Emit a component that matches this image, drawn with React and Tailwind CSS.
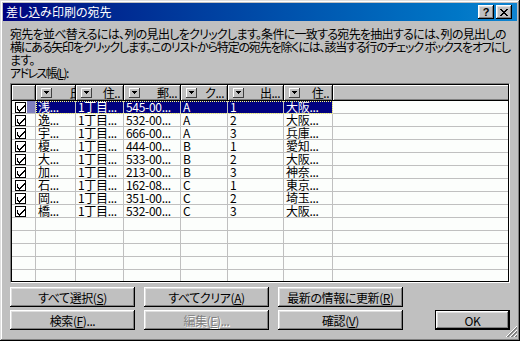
import React from "react";

const data = [
  ["浅...", "1丁目...", "545-00...", "A", "1", "大阪..."],
  ["逸...", "1丁目...", "532-00...", "A", "2", "大阪..."],
  ["宇...", "1丁目...", "666-00...", "A", "3", "兵庫..."],
  ["榎...", "1丁目...", "444-00...", "B", "1", "愛知..."],
  ["大...", "1丁目...", "533-00...", "B", "2", "大阪..."],
  ["加...", "1丁目...", "213-00...", "B", "3", "神奈..."],
  ["石...", "1丁目...", "162-08...", "C", "1", "東京..."],
  ["岡...", "1丁目...", "351-00...", "C", "2", "埼玉..."],
  ["橋...", "1丁目...", "532-00...", "C", "3", "大阪..."],
];

const colW = ["w-[40px]", "w-[48px]", "w-[57px]", "w-[47px]", "w-[56px]", "w-[49px]"];
const heads = ["氏", "住..", "郵...", "ク...", "出...", "住.."];

const raised =
  "shadow-[inset_-1px_-1px_#000,inset_1px_1px_#fff,inset_-2px_-2px_#808080,inset_2px_2px_#dfdfdf]";

function Check() {
  return (
    <div className="w-[11px] h-[11px] bg-white border border-black flex items-center justify-center">
      <svg width="9" height="9" viewBox="0 0 9 9" shapeRendering="crispEdges">
        <path d="M1 3h1v3h1v1h1v-1h1v-1h1v-1h1v-1h1v-1h1v2h-1v1h-1v1h-1v1h-1v1h-1v1h-1v-1h-1v-1h-1z" fill="#000" />
      </svg>
    </div>
  );
}

function HeadBtn() {
  return (
    <div className="w-[11px] h-[10px] bg-[#c0c0c0] shadow-[inset_-1px_-1px_#404040,inset_1px_1px_#fff] flex items-center justify-center">
      <svg width="5" height="3" viewBox="0 0 5 3" shapeRendering="crispEdges">
        <path d="M0 0h5v1h-1v1h-1v1h-1v-1h-1v-1h-1z" fill="#000" />
      </svg>
    </div>
  );
}

function Btn({ children, className = "", disabled = false }) {
  return (
    <div
      className={
        "h-[20px] flex items-center justify-center bg-[#c0c0c0] text-[12px] leading-[13px] tracking-[-0.4px] whitespace-nowrap " +
        raised +
        " " +
        (disabled ? "text-[#808080] [text-shadow:1px_1px_#fff] " : "text-black ") +
        className
      }
    >
      {children}
    </div>
  );
}

export default function App() {
  return (
    <div className="w-[520px] h-[341px] bg-[#c0c0c0] relative font-['Noto_Sans_CJK_JP',sans-serif] [font-feature-settings:'palt'] text-black shadow-[inset_-1px_-1px_#000,inset_1px_1px_#dfdfdf,inset_-2px_-2px_#808080,inset_2px_2px_#fff] p-[3px] flex flex-col overflow-hidden">
      {/* title bar */}
      <div className="h-[18px] bg-gradient-to-r from-[#000080] to-[#1084d0] flex items-center pl-[3px] pr-[5px]">
        <span className="text-white text-[12px] leading-[14px] whitespace-nowrap">差し込み印刷の宛先</span>
        <div className="ml-auto flex gap-[2px]">
          <div className={"w-[16px] h-[14px] bg-[#c0c0c0] flex items-center justify-center " + raised}>
            <span className="font-['Liberation_Sans',sans-serif] font-bold text-[11px] leading-[11px]">?</span>
          </div>
          <div className={"w-[16px] h-[14px] bg-[#c0c0c0] flex items-center justify-center " + raised}>
            <svg width="8" height="7" viewBox="0 0 8 7" shapeRendering="crispEdges">
              <path d="M0 0h2v1h1v1h2v-1h1v-1h2v1h-1v1h-1v1h-1v1h1v1h1v1h1v1h-2v-1h-1v-1h-2v1h-1v1h-2v-1h1v-1h1v-1h1v-1h-1v-1h-1v-1h-1z" fill="#000" />
            </svg>
          </div>
        </div>
      </div>

      {/* body */}
      <div className="flex-1 flex flex-col px-[7px] pt-[6px]">
        <div className="text-[12px] leading-[13px] whitespace-nowrap">
          <div className="tracking-[-0.7px]">宛先を並べ替えるには、列の見出しをクリックします。条件に一致する宛先を抽出するには、列の見出しの</div>
          <div className="tracking-[-1.17px]">横にある矢印をクリックします。このリストから特定の宛先を除くには、該当する行のチェック ボックスをオフにし</div>
          <div className="tracking-[-0.7px]">ます。</div>
          <div className="tracking-[-1.6px]">
            アドレス帳(<span className="underline">L</span>):
          </div>
        </div>

        {/* list */}
        <div className="mt-[4px] h-[200px] border border-t-[#808080] border-l-[#808080] border-b-white border-r-white">
          <div className="h-full border border-black bg-[#fcfefc] overflow-hidden flex flex-col">
            {/* header */}
            <div className="h-[16px] shrink-0 flex bg-[#c0c0c0] text-[12px] leading-[13px]">
              <div className="w-[24px] h-full border-r border-b border-black shadow-[inset_1px_1px_#fff,inset_-1px_-1px_#808080]" />
              {heads.map((h, i) => (
                <div
                  key={i}
                  className={
                    colW[i] +
                    " h-full border-r border-b border-black shadow-[inset_1px_1px_#fff,inset_-1px_-1px_#808080] flex items-center pl-[5px] overflow-hidden"
                  }
                >
                  <HeadBtn />
                  <span className={"ml-auto whitespace-nowrap tracking-[-0.5px] " + (i === 0 ? "mr-[-6px]" : "pr-[3px]")}>{h}</span>
                </div>
              ))}
              <div className="flex-1 h-full border-b border-black shadow-[inset_1px_1px_#fff,inset_0_-1px_#808080]" />
            </div>

            {/* rows */}
            {Array.from({ length: 14 }).map((_, r) => {
              const row = data[r];
              const sel = r === 0;
              return (
                <div key={r} className="h-[13px] shrink-0 flex text-[12px] leading-[12px]">
                  <div className="w-[24px] h-full border-r border-b border-[#c0c0c0] flex items-center pl-[3px]">
                    {row && <Check />}
                    {sel && <div className="ml-[1px] flex-1 h-full bg-[#8080c0]" />}
                  </div>
                  <div className={"flex relative " + (sel ? "bg-[#000080] text-white" : "")}>
                    {colW.map((w, c) => (
                      <div
                        key={c}
                        className={w + " h-[13px] border-r border-b border-[#c0c0c0] pl-[2px] whitespace-nowrap tracking-[-0.3px]"}
                      >
                        {row ? row[c] : ""}
                      </div>
                    ))}
                    {sel && <div className="absolute inset-0 border border-dotted border-[#ffff80]" />}
                  </div>
                  <div className="flex-1 h-full border-b border-[#c0c0c0]" />
                </div>
              );
            })}
          </div>
        </div>

        {/* buttons */}
        <div className="mt-[4px] flex gap-[9px]">
          <Btn className="w-[125px]">
            すべて選択(<span className="underline">S</span>)
          </Btn>
          <Btn className="w-[125px]">
            すべてクリア(<span className="underline">A</span>)
          </Btn>
          <Btn className="w-[125px]">
            最新の情報に更新(<span className="underline">R</span>)
          </Btn>
        </div>
        <div className="mt-[3px] flex gap-[9px]">
          <Btn className="w-[125px]">
            検索(<span className="underline">F</span>)...
          </Btn>
          <Btn className="w-[125px]" disabled>
            編集(<span className="underline">E</span>)...
          </Btn>
          <Btn className="w-[125px]">
            確認(<span className="underline">V</span>)
          </Btn>
          <div className="ml-auto w-[75px] h-[20px] border border-black">
            <Btn className="w-full !h-[18px]">OK</Btn>
          </div>
        </div>
      </div>

      {/* size grip */}
      <svg className="absolute right-[3px] bottom-[3px]" width="12" height="12" viewBox="0 0 12 12" shapeRendering="crispEdges">
        <path d="M11.5 0.5L0.5 11.5M11.5 4.5L4.5 11.5M11.5 8.5L8.5 11.5" stroke="#fff" />
        <path d="M11.5 1.5L1.5 11.5M11.5 2.5L2.5 11.5M11.5 5.5L5.5 11.5M11.5 6.5L6.5 11.5M11.5 9.5L9.5 11.5M11.5 10.5L10.5 11.5" stroke="#808080" />
      </svg>
    </div>
  );
}
